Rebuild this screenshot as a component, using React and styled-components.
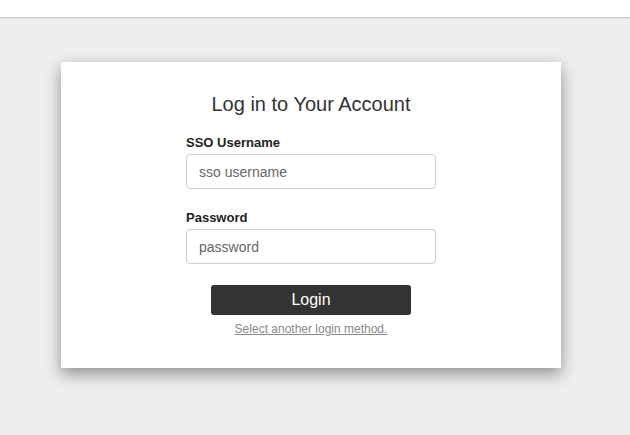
import React from "react";
import styled, { createGlobalStyle } from "styled-components";

const Global = createGlobalStyle`
  html, body { margin: 0; padding: 0; background: #eeeeee; }
  body { font-family: "Liberation Sans", Arial, Helvetica, sans-serif; }
  * { box-sizing: border-box; }
`;

const TopBar = styled.header`
  height: 18px;
  background: #ffffff;
  border-bottom: 1px solid #c9c9c9;
  box-shadow: 0 1px 1px rgba(0, 0, 0, 0.06);
`;

const Main = styled.main`
  width: 622px;
  min-height: 417px;
  padding: 44px 0 40px;
`;

const Card = styled.section`
  width: 500px;
  margin: 0 auto;
  background: #ffffff;
  box-shadow: 0 6px 15px rgba(0, 0, 0, 0.4);
  padding: 31px 0 32px;
  display: flex;
  flex-direction: column;
  align-items: center;
`;

const Title = styled.h1`
  margin: 0 0 19px;
  font-size: 20px;
  line-height: 23px;
  font-weight: normal;
  color: #333333;
`;

const Form = styled.form`
  width: 250px;
  display: flex;
  flex-direction: column;
`;

const Field = styled.div`
  display: flex;
  flex-direction: column;
  gap: 4px;
  margin-bottom: ${(p) => p.$gap}px;
`;

const Label = styled.label`
  font-size: 13px;
  line-height: 15px;
  font-weight: bold;
  color: #222222;
`;

const Input = styled.input`
  width: 250px;
  height: 35px;
  border: 1px solid #cccccc;
  border-radius: 4px;
  padding: 0 12px;
  font-family: "Liberation Sans", Arial, sans-serif;
  font-size: 14px;
  color: #333;
  outline: none;
  &::placeholder { color: #666666; }
`;

const Button = styled.button`
  align-self: center;
  width: 200px;
  height: 30px;
  border: none;
  border-radius: 3px;
  background: #333333;
  color: #ffffff;
  font-family: "Liberation Sans", Arial, sans-serif;
  font-size: 16px;
  cursor: pointer;
`;

const AltLink = styled.a`
  align-self: center;
  margin-top: 7px;
  font-size: 12px;
  line-height: 14px;
  color: #888888;
  text-decoration: underline;
`;

export default function App() {
  return (
    <>
      <Global />
      <TopBar />
      <Main>
        <Card>
          <Title>Log in to Your Account</Title>
          <Form onSubmit={(e) => e.preventDefault()}>
            <Field $gap={21}>
              <Label htmlFor="sso">SSO Username</Label>
              <Input id="sso" placeholder="sso username" />
            </Field>
            <Field $gap={21}>
              <Label htmlFor="pw">Password</Label>
              <Input id="pw" type="password" placeholder="password" />
            </Field>
            <Button type="submit">Login</Button>
            <AltLink href="#">Select another login method.</AltLink>
          </Form>
        </Card>
      </Main>
    </>
  );
}
